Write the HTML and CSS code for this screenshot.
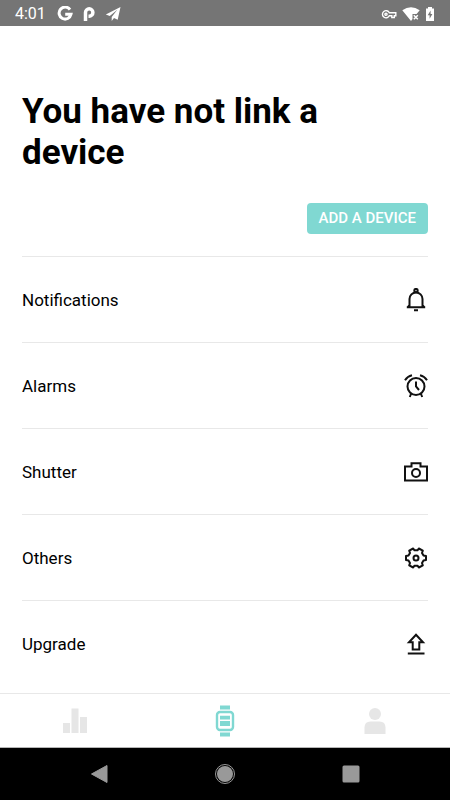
FILE: index.html
```
<!DOCTYPE html>
<html lang="en">
<head>
<meta charset="utf-8">
<meta name="viewport" content="width=device-width, initial-scale=1">
<title>Device</title>
<link rel="stylesheet" href="styles.css">
</head>
<body>
<header class="status">
  <div class="status-group">
    <span class="clock">4:01</span>
    <svg width="16" height="16" viewBox="0 0 16 16" fill="none" stroke="#fff" stroke-width="3"><path d="M13 3.600A6 6 0 1 0 14 8.300H8.200"/></svg>
    <svg width="16" height="16" viewBox="0 0 16 16" fill="none" stroke="#fff" stroke-width="3.500"><path d="M4.500 15V6.500A3.700 3.700 0 1 1 8.200 10.200H7.500"/></svg>
    <svg width="16" height="16" viewBox="0 0 16 16" fill="#fff"><path d="M15.500 1 .8 8.400l4 1.600 7.500-6.300L6.700 11v4l2.300-2.900 3.700 1.600z"/></svg>
  </div>
  <div class="status-group status-right">
    <svg width="16" height="16" viewBox="0 0 16 16" fill="none" stroke="#fff" stroke-width="1.400"><path d="M8.300 6.700A3.600 3.600 0 1 0 8.300 9.800H10.800V11.500H13.300V9.800H14.800V6.700Z"/><circle cx="5" cy="8.200" r="1.100"/></svg>
    <svg width="18" height="16" viewBox="0 0 18 16"><path fill="#fff" d="M.3 4.300Q9-1.900 17.700 4.300L14.600 8H10.500V13L9 15Z"/><path d="m11.800 9.300 4 4m0-4-4 4" stroke="#fff" stroke-width="1.500"/></svg>
    <svg width="10" height="16" viewBox="0 0 10 16"><path fill="#fff" d="M3 1h4v1.500h2V15H1V2.500h2z"/><path fill="#757575" d="M5.600 4.500 2.700 9.300h1.900v3.500l2.800-4.900H5.600z"/></svg>
  </div>
</header>

<main class="content">
  <h1 class="title">You have not link a device</h1>
  <button class="add" type="button">ADD A DEVICE</button>
  <nav class="menu" aria-label="Device settings">
    <a class="row" href="#notifications">Notifications
      <svg class="icon" viewBox="0 0 24 24"><circle cx="12" cy="2.600" r="1.700"/><path d="M5.500 18.500V11a6.500 6.500 0 0 1 13 0v7.500M3.800 19.200 5.500 17M20.200 19.200 18.500 17M2.800 19.200h18.400M10 22.200h4"/></svg>
    </a>
    <a class="row" href="#alarms">Alarms
      <svg class="icon" viewBox="0 0 24 24"><circle cx="12" cy="12.500" r="8.500"/><path d="M12 7.500v5l3 3.500M1 6.300Q3.500 2.300 8 1.300M23 6.300Q20.500 2.300 16 1.300M7.200 19.500 5.800 23M16.800 19.500 18.200 23"/></svg>
    </a>
    <a class="row" href="#shutter">Shutter
      <svg class="icon" viewBox="0 0 24 24"><path d="M1 6.500h6.500V3.200h9v3.300H23v14H1z"/><circle cx="12" cy="13" r="4"/></svg>
    </a>
    <a class="row" href="#others">Others
      <svg class="icon" viewBox="0 0 24 24"><path stroke-linejoin="round" d="M9.200 2.500 10.500 4.300H13.500L14.800 2.500 18.800 4.700 18 7 19.500 9.500 22 10V14L19.500 14.500 18 17 18.800 19.300 14.800 21.500 13.500 19.700H10.500L9.200 21.500 5.200 19.300 6 17 4.500 14.500 2 14V10L4.500 9.500 6 7 5.200 4.700Z"/><circle cx="12" cy="12" r="2.500"/></svg>
    </a>
    <a class="row" href="#upgrade">Upgrade
      <svg class="icon" viewBox="0 0 24 24"><path d="M12 2.800 19 10.300H15.300V17.500H8.700V10.300H5ZM3.800 21.500h16.700"/></svg>
    </a>
  </nav>
</main>

<nav class="tabs" aria-label="Sections">
  <a class="tab" href="#stats" aria-label="Statistics"><svg width="32" height="32" viewBox="0 0 32 32" fill="currentColor"><path d="M4 18h7v10H4zM12.500 3.500h7V28h-7zM21 12h7v16h-7z"/></svg></a>
  <a class="tab tab-active" href="#device" aria-label="Device"><svg width="32" height="32" viewBox="0 0 32 32" fill="currentColor"><path d="M11 .5h10v4H11zM11 27.500h10v4H11zM11 10.700h10v3.800H11zM11 16h10v5H11z"/><rect x="8" y="7" width="16" height="18" rx="3" fill="none" stroke="currentColor" stroke-width="2.400"/></svg></a>
  <a class="tab" href="#profile" aria-label="Profile"><svg width="32" height="32" viewBox="0 0 32 32" fill="currentColor"><circle cx="16" cy="9" r="6"/><path d="M5.500 29V22.500q0-6 6-6h9q6 0 6 6V29z"/></svg></a>
</nav>

<footer class="system">
  <button class="key" type="button" aria-label="Back"><svg width="22" height="22" viewBox="0 0 22 22" fill="#999"><path d="M18 2.500v17L2.500 11z" stroke="#999" stroke-linejoin="round"/></svg></button>
  <button class="key" type="button" aria-label="Home"><svg width="22" height="22" viewBox="0 0 22 22" fill="#999"><circle cx="11" cy="11" r="8"/><circle cx="11" cy="11" r="9.500" fill="none" stroke="#999"/></svg></button>
  <button class="key" type="button" aria-label="Recent apps"><svg width="22" height="22" viewBox="0 0 22 22" fill="#999"><rect x="2.500" y="2.500" width="17" height="17" rx="1.500"/></svg></button>
</footer>
</body>
</html>
```
FILE: styles.css
```
* { box-sizing: border-box; }

body {
  display: flex;
  flex-direction: column;
  min-height: 100vh;
  margin: 0;
  background: #fff;
  color: #000;
  font-family: Roboto, sans-serif;
}

svg { display: block; flex: none; }

.status {
  display: flex;
  justify-content: space-between;
  height: 26px;
  padding: 1px 15px 0;
  background: #757575;
  color: #fff;
}

.status-group {
  display: flex;
  align-items: center;
  gap: 8px;
}

.status-right { gap: 5px; }

.clock {
  margin-right: 3px;
  font-size: 16px;
  line-height: 24px;
}

.content {
  flex: 1;
  display: flex;
  flex-direction: column;
  padding: 65px 22px 0;
}

.title {
  margin: 0 0 30px;
  font-size: 35px;
  line-height: 41px;
  font-weight: 700;
}

.add {
  align-self: flex-end;
  height: 31px;
  margin: 0 0 22px;
  padding: 0 12px;
  border: 0;
  border-radius: 4px;
  background: #80d8d2;
  color: #fff;
  font: 500 15px/31px Roboto, sans-serif;
}

.row {
  display: flex;
  align-items: center;
  justify-content: space-between;
  height: 86px;
  border-top: 1px solid #e8e8e8;
  color: #000;
  font-size: 17px;
  line-height: 24px;
  text-decoration: none;
}

.icon {
  width: 24px;
  height: 24px;
  fill: none;
  stroke: #111;
  stroke-width: 2;
}

.tabs {
  display: flex;
  height: 55px;
  border-top: 1px solid #e8e8e8;
  border-bottom: 1px solid #b5b5b5;
}

.tab {
  flex: 1;
  display: flex;
  align-items: center;
  justify-content: center;
  color: #e6e6e6;
}

.tab-active { color: #80d8d2; }

.system {
  display: flex;
  justify-content: center;
  gap: 23%;
  height: 52px;
  background: #000;
}

.key {
  display: flex;
  align-items: center;
  padding: 0;
  border: 0;
  background: none;
}
```
